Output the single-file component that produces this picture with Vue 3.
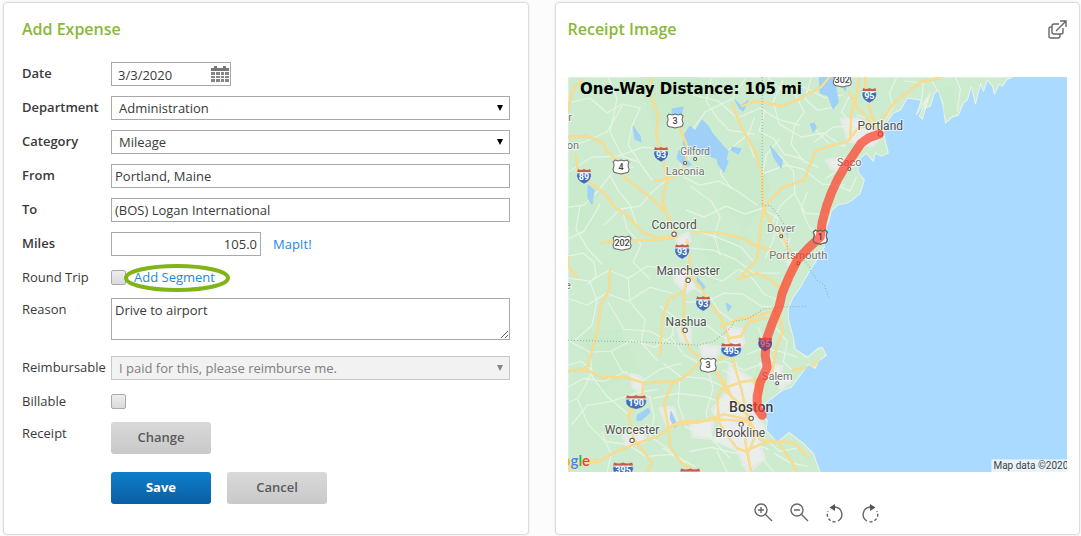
<script setup>
import { ref } from 'vue'

const date = ref('3/3/2020')
const department = ref('Administration')
const category = ref('Mileage')
const from = ref('Portland, Maine')
const to = ref('(BOS) Logan International')
const miles = ref('105.0')
const roundTrip = ref(false)
const reason = ref('Drive to airport')
const reimbursable = ref('I paid for this, please reimburse me.')
const billable = ref(false)

const coast =
  'M568 77H1012L1006 80L1002 86L999 84L994 94L992 86L987 80L983 91L980 84L975 104L971 86L967 100L963 103L958 115L952 117L945 123L943 107L938 90L934 93L930 106L924 108L930 92L922 119L919 116L927 97L916 115L921 100L907 98L900 110L893 113L888 120L883 130L885 141L888 153L881 156L875 153L873 161L866 153L860 158L857 164L858 172L864 180L860 193L852 200L847 203L837 205L831 211L829 220L825 230L824 247L815 262L808 273L800 287L793 297L788 308L788 318L793 337L795 349L807 357L818 348L822 347L826 355L818 361L815 368L808 364L803 371L791 387L782 390L773 397L765 403L759 410L767 420L766 430L777 442L789 432L803 443L813 453L820 472H568Z'

const parks = [
  'M640 77L700 77L720 100L690 130L650 120Z', 'M570 170L600 190L590 230L568 226Z',
  'M730 150L760 140L770 190L745 230L720 200Z', 'M575 330L620 330L640 370L600 390Z',
  'M700 240L740 235L742 270L712 285Z', 'M784 318L793 337L790 350L786 340Z', 'M936 90L950 85L956 112L945 118Z'
]

const lakes = [
  'M685 133L690 126L695 131L702 120L708 126L712 133L722 145L728 151L726 160L715 158L704 154L695 149L687 151L683 144Z',
  'M679 150L685 157L691 165L684 166L677 158Z', 'M732 147L741 149L738 154L731 150Z', 'M716 155L728 161L724 172L718 164Z',
  'M672 109L683 107L681 115L672 118Z', 'M633 126L640 136L641 142L635 139Z', 'M588 185L594 190L592 204L588 198Z',
  'M735 100L741 106L748 100L743 111L739 108Z', 'M770 146L782 160L781 168L774 158Z', 'M819 77L834 77L838 102L833 109L828 96L820 93Z',
  'M843 77L847 81L845 91L842 84Z', 'M637 415L648 408L650 412L641 420L637 420Z', 'M697 277L705 287L703 289L697 282Z',
  'M726 303L731 306L728 311Z', 'M810 124L814 123L816 128L813 132Z', 'M671 411L677 425L674 427L670 418Z'
]

const urban = [
  'M729 366L751 378L760 398L754 414L764 426L759 442L764 458L748 472L736 449L714 440L720 424L712 409L728 391Z',
  'M841 119L858 119L872 126L880 137L872 146L848 141Z', 'M826 160L847 158L855 165L846 170L832 169Z',
  'M673 268L689 270L694 287L687 292L675 282Z', 'M678 329L690 328L690 343L681 340Z', 'M700 345L720 347L716 357L703 356Z',
  'M623 436L644 429L646 441L627 446Z', 'M676 237L688 233L690 241L679 247Z', 'M728 327L741 329L744 343L735 350L726 342Z',
  'M760 363L782 366L779 377L765 377Z', 'M660 408L673 407L678 422L669 429Z', 'M780 237L789 239L786 246Z',
  'M681 152L687 153L688 164L681 166Z', 'M631 374L641 377L643 392L633 387Z', 'M690 422L713 420L710 438L693 437Z',
  'M789 253L796 252L797 262L787 264Z', 'M773 378L791 380L781 388Z', 'M741 405L761 405L761 413L742 414Z'
]

const minorRoads = [
  'M568 103L590 98L607 113L622 104L640 108', 'M608 77L617 99L610 132L622 156L639 162L652 180',
  'M568 148L586 141L607 132L622 106', 'M568 172L592 157L618 156L643 147L653 148', 'M640 108L632 126L628 145L639 161',
  'M569 207L584 205L598 191L611 174L633 167', 'M568 239L584 231L592 218L600 204', 'M580 205L576 229L588 249L602 264',
  'M604 225L620 209L640 206L652 192L666 180', 'M610 175L618 190L630 205L637 226', 'M622 209L627 229L641 244L633 262L650 279',
  'M568 278L590 281L609 270L628 278L647 266L666 268', 'M568 298L587 305L606 293L628 301L650 287L672 293',
  'M590 281L597 301L592 325L575 340', 'M628 278L630 302L645 320L641 342L657 360', 'M608 302L624 329L650 331L675 345',
  'M568 340L590 352L611 351L632 340L655 347L674 334', 'M611 351L622 371L642 381L660 369L681 363', 'M590 352L592 376L607 396L627 413',
  'M568 387L584 378L604 381L627 371', 'M572 424L587 405L611 401L635 393L657 389', 'M578 400L588 424L605 441L627 444',
  'M602 432L611 454L607 472', 'M627 444L646 456L671 454L695 466', 'M637 391L650 397L654 416L650 436L670 450',
  'M684 177L699 185L719 181L737 191L757 205', 'M690 186L711 201L720 217L714 236L720 255', 'M686 210L704 217L726 206L745 214L762 208',
  'M684 224L703 233L714 236L741 247L753 261', 'M711 78L706 101L717 118L729 130L754 134', 'M693 95L718 101L737 118L760 108L777 119L799 125',
  'M692 130L705 112L732 99L745 79', 'M746 136L727 151L720 173L731 188', 'M754 118L747 138L754 157', 'M765 110L759 131L774 139L784 154L803 159',
  'M792 89L804 112L794 126L791 144L803 161L818 167', 'M768 78L782 90L804 87L825 98L842 95', 'M811 77L805 99L817 110L836 107',
  'M783 80L773 102L779 124L801 137L823 133L844 147', 'M764 173L786 165L803 169L822 184L844 185', 'M779 139L766 155L762 176',
  'M778 154L793 171L795 195L805 213L827 215', 'M795 192L779 207L772 224L779 237', 'M807 192L801 208L809 227L824 238',
  'M814 128L829 144L845 145', 'M814 142L833 127L848 126', 'M826 178L842 168L860 162', 'M836 185L850 191L856 177',
  'M690 248L713 250L735 259L754 273L779 273', 'M697 271L722 281L739 269L752 278L764 294L781 301', 'M692 286L711 298L719 311L736 323',
  'M686 302L706 302L723 293L743 294L761 306L784 308', 'M680 318L701 320L718 334L736 343', 'M660 306L676 318L671 337L682 352',
  'M683 354L704 366L725 361L744 370L764 363', 'M663 363L680 376L704 378L725 387L747 384', 'M653 398L677 393L704 396L728 404L751 418',
  'M680 377L678 403L686 427L708 435L731 447', 'M706 363L713 388L706 412L711 438L730 458', 'M736 362L743 388L738 411L752 421',
  'M747 354L763 348L783 352L797 357', 'M758 327L766 350L778 370L790 383', 'M776 328L787 341L783 362L791 369',
  'M690 451L711 447L736 453L754 443L768 449', 'M750 424L764 437L779 451L796 448', 'M774 453L789 462L807 466', 'M663 448L682 459L691 472',
  'M717 451L727 472', 'M741 465L762 458L774 472', 'M723 370L736 377L747 391L755 404', 'M718 405L735 415L750 419',
  'M896 78L889 93L893 107L884 121', 'M904 81L923 83L921 104', 'M930 77L937 91L943 104', 'M955 77L960 89L957 111',
  'M857 115L869 119L877 128', 'M849 97L841 112L850 122L860 129', 'M765 258L773 240L778 218L764 210',
  'M568 256L583 253L594 262L596 276L588 284', 'M568 365L581 361L592 370L586 384L578 398L569 402'
]

const yellowRoads = [
  'M568 111L572 91L582 80', 'M568 137L586 136L603 142L606 151L616 159L624 177L638 188L654 200L664 211',
  'M576 156L578 170L589 181L604 193L615 207L628 216L642 232L657 238L675 236', 'M650 77L652 100L658 115L656 135L661 151L665 169L667 181L662 201L670 222L677 236',
  'M680 129L688 148L685 166L671 178L655 181', 'M565 471L579 464L599 461L616 451L637 443L657 436L676 424L699 422L724 414L748 419',
  'M601 243L618 240L650 240L674 238', 'M687 240L690 263L687 276L684 293L684 310L682 330L691 351L702 359',
  'M693 232L716 232L742 238L754 245L768 249L782 257L798 261', 'M732 104L741 127L754 150L762 174L763 207',
  'M742 106L755 101L781 106L799 99L821 87L829 77', 'M763 207L771 223L782 236L789 250L797 260', 'M763 208L782 187L804 180L815 151L832 145L847 142L858 128L873 125',
  'M763 209L760 230L757 259L742 275', 'M577 277L568 266L568 257', 'M610 270L609 290L601 304L597 332L588 365L583 371',
  'M568 371L584 369L604 377L626 377L645 383L672 381L681 379', 'M690 276L699 285L710 303L721 318L728 337L733 361L741 388L747 417',
  'M684 291L668 299L662 320L660 355', 'M721 326L741 318L751 317L776 310', 'M737 279L757 273L771 280L782 290', 'M776 310L783 283L798 261',
  'M728 338L741 336L748 322L765 318', 'M729 355L708 362L702 359L689 373L672 384L664 403L668 426L670 447L681 462L696 472',
  'M668 427L681 421L698 421L719 419L748 421', 'M630 402L629 418L634 439L652 462L647 472', 'M714 370L724 382L733 399L744 412L751 418',
  'M748 419L755 436L748 452L737 448L727 435L719 422L717 397L721 389L740 382L758 379L767 380', 'M748 419L760 439L779 443L790 459L797 472',
  'M749 423L745 441L751 472', 'M746 450L763 443L776 440L794 443L807 456', 'M709 359L718 375L726 391L739 403L749 418',
  'M793 370L810 366L821 360', 'M849 93L857 107L867 118L876 129', 'M865 77L865 94L872 117L880 132', 'M881 122L895 101L909 91L920 82L939 78',
  'M859 77L857 93L851 112L850 137', 'M754 382L761 394L756 408', 'M777 312L783 330L776 348L772 374', 'M568 466L588 460L601 460', 'M643 383L642 403L629 413'
]

const stateLines = [
  'M762 77L762 206L770 205L780 218L787 229L787 250L802 258L811 269', 'M568 340L650 342L698 345L714 341L731 327L734 321L747 319L763 309L776 307L806 306', 'M810 270L817 280L824 285L829 298'
]

const route =
  'M879 134L868 138L861 143L853 155L845 166L837 180L831 193L826 207L822 222L820 237L808 248L797 260L789 276L782 293L779 306L772 323L766 340L765 355L767 367L760 382L757 396L757 408L762 415'

const cities = [
  { name: 'Portland', x: 880, y: 130, size: 12, dot: [880, 134] },
  { name: 'Saco', x: 849, y: 166, size: 11, minor: true, dot: [849, 169] },
  { name: 'Gilford', x: 695, y: 155, size: 10, minor: true, dot: [695, 159] },
  { name: 'Laconia', x: 685, y: 175, size: 11, minor: true, dot: [685, 163] },
  { name: 'Concord', x: 674, y: 229, size: 12, dot: [674, 234] },
  { name: 'Dover', x: 781, y: 232, size: 11, minor: true, dot: [781, 236] },
  { name: 'Portsmouth', x: 798, y: 259, size: 11, minor: true, dot: [798, 263] },
  { name: 'Manchester', x: 688, y: 275, size: 12, dot: [688, 280] },
  { name: 'Nashua', x: 686, y: 326, size: 12, dot: [685, 330] },
  { name: 'Salem', x: 777, y: 380, size: 11, minor: true, dot: [777, 383] },
  { name: 'Boston', x: 751, y: 412, size: 14, capital: true, dot: [751, 418] },
  { name: 'Brookline', x: 740, y: 437, size: 12, dot: [741, 424] },
  { name: 'Worcester', x: 632, y: 434, size: 12, dot: [632, 440] },
  { name: 'r', x: 570, y: 121, size: 11, minor: true },
  { name: 'on', x: 573, y: 149, size: 11, minor: true },
  { name: 'e', x: 568, y: 289, size: 11, minor: true }
]

const interstates = [
  { n: '93', x: 661, y: 154 }, { n: '89', x: 584, y: 176 }, { n: '93', x: 682, y: 251 }, { n: '93', x: 703, y: 303 },
  { n: '95', x: 869, y: 95 }, { n: '190', x: 636, y: 402, wide: true }, { n: '495', x: 731, y: 350, wide: true },
  { n: '395', x: 623, y: 469, wide: true }, { n: '', x: 690, y: 475, wide: true }
]

const usRoutes = [
  { n: '3', x: 675, y: 121 }, { n: '4', x: 621, y: 167 }, { n: '202', x: 622, y: 243, wide: true },
  { n: '3', x: 708, y: 365 }, { n: '302', x: 842, y: 80, wide: true }
]
</script>

<template>
  <main class="page">
    <form class="panel expense" @submit.prevent>
      <h2>Add Expense</h2>

      <div class="rows">
        <div class="row">
          <label class="required" for="date">Date</label>
          <div class="date-box">
            <input id="date" v-model="date" type="text" />
            <button type="button" class="calendar" aria-label="Choose date">
              <svg viewBox="0 0 18 16" width="18" height="16" aria-hidden="true">
                <path d="M0 2H18V5H0Z" fill="#777" />
                <path d="M3 0H6V3H3ZM12 0H15V3H12Z" fill="#777" />
                <path d="M0 6h4v3H0zM5 6h4v3H5zM10 6h3v3h-3zM14 6h4v3h-4zM0 10h4v2H0zM5 10h4v2H5zM10 10h3v2h-3zM14 10h4v2h-4zM0 13h4v3H0zM5 13h4v3H5zM10 13h3v3h-3zM14 13h4v3h-4z" fill="#858585" />
              </svg>
            </button>
          </div>
        </div>

        <div class="row">
          <label class="required" for="department">Department</label>
          <div class="select-box">
            <select id="department" v-model="department"><option>Administration</option></select>
            <svg class="caret" viewBox="0 0 8 6" aria-hidden="true"><path d="M1 0H7L4 6Z" /></svg>
          </div>
        </div>

        <div class="row">
          <label class="required" for="category">Category</label>
          <div class="select-box">
            <select id="category" v-model="category"><option>Mileage</option></select>
            <svg class="caret" viewBox="0 0 8 6" aria-hidden="true"><path d="M1 0H7L4 6Z" /></svg>
          </div>
        </div>

        <div class="row">
          <label class="required" for="from">From</label>
          <input id="from" v-model="from" class="text" type="text" />
        </div>

        <div class="row">
          <label class="required" for="to">To</label>
          <input id="to" v-model="to" class="text" type="text" />
        </div>

        <div class="row">
          <label class="required" for="miles">Miles</label>
          <div class="inline">
            <input id="miles" v-model="miles" class="text miles" type="text" />
            <a href="#map">MapIt!</a>
          </div>
        </div>

        <div class="row">
          <label for="round-trip">Round Trip</label>
          <div class="inline check-line">
            <input id="round-trip" v-model="roundTrip" type="checkbox" />
            <span class="highlight">
              <a href="#segment">Add Segment</a>
              <svg class="ring" viewBox="0 0 106 28" aria-hidden="true"><ellipse cx="53" cy="14" rx="51" ry="12" /></svg>
            </span>
          </div>
        </div>

        <div class="row">
          <label for="reason">Reason</label>
          <textarea id="reason" v-model="reason"></textarea>
        </div>

        <div class="row spaced">
          <label for="reimbursable">Reimbursable</label>
          <div class="select-box disabled">
            <select id="reimbursable" v-model="reimbursable" disabled><option>I paid for this, please reimburse me.</option></select>
            <svg class="caret" viewBox="0 0 8 6" aria-hidden="true"><path d="M1 0H7L4 6Z" /></svg>
          </div>
        </div>

        <div class="row">
          <label for="billable">Billable</label>
          <div class="inline check-line">
            <input id="billable" v-model="billable" type="checkbox" />
          </div>
        </div>

        <div class="row">
          <label for="receipt">Receipt</label>
          <div><button id="receipt" type="button" class="btn">Change</button></div>
        </div>
      </div>

      <div class="actions">
        <button type="submit" class="btn primary">Save</button>
        <button type="button" class="btn">Cancel</button>
      </div>
    </form>

    <section class="panel receipt">
      <header>
        <h2>Receipt Image</h2>
        <button type="button" class="icon" aria-label="Open in new window">
          <svg viewBox="0 0 20 20" width="20" height="20" aria-hidden="true">
            <path d="M12 5H7Q5 5 5 7V13Q5 15 7 15H14Q16 15 16 13V9M5 8H4Q2 8 2 10V17Q2 19 4 19H11Q13 19 13 17V15M9 12L19 2M13 2H19V8" />
          </svg>
        </button>
      </header>

      <svg id="map" class="map" viewBox="568 77 499 395" role="img" aria-label="Route map from Portland to Boston">
        <defs>
          <clipPath id="land"><path :d="coast" /></clipPath>
        </defs>
        <rect x="568" y="77" width="499" height="395" fill="#aadaff" />
        <path :d="coast" fill="#cdebcf" stroke="#e9f4e6" stroke-width="1" />
        <g clip-path="url(#land)">
          <path v-for="d in parks" :key="d" :d="d" fill="#c3e8c6" opacity="0.4" />
          <path v-for="d in urban" :key="d" :d="d" fill="#ebedec" stroke="#e4ebe4" stroke-width="3" stroke-linejoin="round" />
          <path v-for="d in minorRoads" :key="d" class="road minor" :d="d" />
          <path v-for="d in lakes" :key="d" :d="d" fill="#9fd0f8" stroke="#9fd0f8" stroke-linejoin="round" />
          <path v-for="d in yellowRoads" :key="d" class="road casing" :d="d" />
          <path v-for="d in yellowRoads" :key="d" class="road major" :d="d" />
        </g>
        <path v-for="d in stateLines" :key="d" :d="d" fill="none" stroke="#9aa9ad" stroke-dasharray="1 2" stroke-width="1" />

        <g v-for="(c, i) in cities" :key="i">
          <circle v-if="c.dot" :cx="c.dot[0]" :cy="c.dot[1]" :r="c.minor ? 1.5 : 2.2" fill="#fff" stroke="#555" />
          <text :class="['city', { small: c.minor, capital: c.capital }]" :x="c.x" :y="c.y" :font-size="c.size">{{ c.name }}</text>
        </g>

        <g transform="translate(820 237)">
          <path class="us" d="M-7 -5L-5 -7L-2 -6L0 -7L2 -6L5 -7L7 -5Q5 -2 7 2Q7 6 3 6L0 7L-3 6Q-7 6 -7 2Q-5 -2 -7 -5Z" />
        </g>
        <g transform="translate(765 343)">
          <path d="M-6 -3H6Q9 4 0 8Q-9 4 -6 -3Z" fill="#3c70b8" />
          <path d="M-6 -6Q-3 -4 0 -6Q3 -4 6 -6L7 -3H-7Z" fill="#c94b49" />
        </g>
        <path :d="route" fill="none" stroke="#ff3c28" stroke-opacity="0.7" stroke-width="9" stroke-linecap="round" stroke-linejoin="round" />
        <g transform="translate(820 237)">
          <path class="us faint" d="M-7 -5L-5 -7L-2 -6L0 -7L2 -6L5 -7L7 -5Q5 -2 7 2Q7 6 3 6L0 7L-3 6Q-7 6 -7 2Q-5 -2 -7 -5Z" />
          <text class="us-text" y="3">1</text>
        </g>
        <g transform="translate(765 343)">
          <path d="M-6 -3H6Q9 4 0 8Q-9 4 -6 -3Z" fill="#6b3f78" fill-opacity="0.7" />
          <text class="interstate-text muted" y="4">95</text>
        </g>

        <g v-for="(s, i) in interstates" :key="'i' + i" :transform="`translate(${s.x} ${s.y})`">
          <path v-if="s.wide" d="M-10 -3H10Q12 5 0 7Q-12 5 -10 -3Z" fill="#3c70b8" stroke="#fff" stroke-width="0.5" />
          <path v-else d="M-7 -3H7Q9 4 0 8Q-9 4 -7 -3Z" fill="#3c70b8" stroke="#fff" stroke-width="0.5" />
          <path v-if="s.wide" d="M-9 -7Q-4 -5 0 -7Q4 -5 9 -7L10 -4H-10Z" fill="#c65b50" />
          <path v-else d="M-6 -7Q-3 -5 0 -7Q3 -5 6 -7L7 -4H-7Z" fill="#c65b50" />
          <text class="interstate-text" y="4">{{ s.n }}</text>
        </g>
        <g v-for="(s, i) in usRoutes" :key="'u' + i" :transform="`translate(${s.x} ${s.y})`">
          <path v-if="s.wide" class="us" d="M-9 -5L-7 -7L-3 -6L0 -7L3 -6L7 -7L9 -5Q7 -2 9 2Q9 6 4 6L0 7L-4 6Q-9 6 -9 2Q-7 -2 -9 -5Z" />
          <path v-else class="us" d="M-8 -5L-6 -7L-3 -6L0 -7L3 -6L6 -7L8 -5Q6 -2 8 2Q8 6 4 6L0 7L-4 6Q-8 6 -8 2Q-6 -2 -8 -5Z" />
          <text class="us-text" y="3">{{ s.n }}</text>
        </g>

        <text class="brand" x="562" y="466"><tspan fill="#f4b400">o</tspan><tspan fill="#4285f4">g</tspan><tspan fill="#34a853">l</tspan><tspan fill="#ea4335">e</tspan></text>
        <text class="distance" x="580" y="94">One-Way Distance: 105 mi</text>
        <rect x="991" y="459" width="76" height="13" fill="#e8f3fb" />
        <text class="credit" x="993" y="469">Map data ©2020</text>
      </svg>

      <div class="tools">
        <button type="button" class="icon" aria-label="Zoom in">
          <svg viewBox="0 0 20 20" width="20" height="20" aria-hidden="true">
            <circle cx="8" cy="7" r="6" /><path d="M12 11L19 18M8 4V10M5 7H11" />
          </svg>
        </button>
        <button type="button" class="icon" aria-label="Zoom out">
          <svg viewBox="0 0 20 20" width="20" height="20" aria-hidden="true">
            <circle cx="8" cy="7" r="6" /><path d="M12 11L19 18M5 7H11" />
          </svg>
        </button>
        <button type="button" class="icon" aria-label="Rotate left">
          <svg viewBox="0 0 20 20" width="20" height="20" aria-hidden="true">
            <path d="M8 4H10A7.500 7.500 0 0 1 13 18" /><path d="M10.500 18.800A7.500 7.500 0 0 1 3 8" stroke-dasharray="3 2" /><path class="solid" d="M4.500 4.500L10 1V8Z" />
          </svg>
        </button>
        <button type="button" class="icon" aria-label="Rotate right">
          <svg viewBox="0 0 20 20" width="20" height="20" aria-hidden="true">
            <path d="M11 4H9A7.500 7.500 0 0 0 6 18" /><path d="M8.500 18.800A7.500 7.500 0 0 0 16 8" stroke-dasharray="3 2" /><path class="solid" d="M14.500 4.500L9 1V8Z" />
          </svg>
        </button>
      </div>
    </section>
  </main>
</template>

<style>
body {
  background: #fcfcfc;
}
</style>

<style scoped>
.page {
  display: grid;
  grid-template-columns: 1fr 1fr;
  gap: 26px;
  padding: 2px 1px 1px 3px;
  color: #3a3a3a;
  font: 13px/22px "Open Sans", "Noto Sans", sans-serif;
}
.page *,
.page {
  box-sizing: border-box;
}
.panel {
  min-width: 0;
  border: 1px solid #dcdcdc;
  border-radius: 4px;
  background: #fff;
  box-shadow: 0 0 3px rgba(0, 0, 0, 0.08);
}
.expense {
  padding: 15px 18px 30px;
}
.receipt {
  padding: 15px 12px 10px;
}
h2 {
  margin: 0;
  color: #8ab839;
  font-size: 16px;
  font-weight: 600;
  line-height: 22px;
}
.rows {
  display: flex;
  flex-direction: column;
  gap: 10px;
  margin-top: 22px;
}
.row {
  display: grid;
  grid-template-columns: 89px minmax(0, 1fr);
  align-items: start;
}
.spaced {
  margin-top: 6px;
}
.required {
  font-weight: 600;
}
input,
select,
textarea,
button {
  margin: 0;
  color: inherit;
  font: inherit;
}
.text,
.date-box,
select,
textarea {
  display: block;
  width: 100%;
  height: 24px;
  border: 1px solid #a9a9a9;
  border-radius: 0;
  background: #fff;
}
.text {
  padding: 0 3px;
}
.date-box {
  display: flex;
  align-items: center;
  width: 120px;
  padding-right: 1px;
}
.date-box input {
  flex: 1;
  min-width: 0;
  height: 22px;
  padding: 2px 0 0 6px;
  border: 0;
  background: none;
}
.calendar {
  display: flex;
  padding: 0;
  border: 0;
  background: none;
}
.select-box {
  position: relative;
}
select {
  padding: 0 24px 0 7px;
  appearance: none;
}
.caret {
  position: absolute;
  top: 9px;
  right: 6px;
  width: 8px;
  height: 6px;
  fill: #000;
  pointer-events: none;
}
.disabled select {
  border-color: #c8c8c8;
  background: #f2f2f2;
  color: #808080;
  opacity: 1;
}
.disabled .caret {
  fill: #858585;
}
.inline {
  display: flex;
  align-items: center;
  gap: 12px;
}
.miles {
  width: 150px;
  text-align: right;
}
a {
  color: #2389dc;
  text-decoration: none;
}
.check-line {
  height: 22px;
  gap: 8px;
}
input[type="checkbox"] {
  width: 15px;
  height: 15px;
  border: 1px solid #aaa;
  border-radius: 2px;
  background: linear-gradient(#eee, #dadada);
  appearance: none;
}
.highlight {
  position: relative;
}
.ring {
  position: absolute;
  top: -2px;
  left: -10px;
  width: 106px;
  height: 28px;
  fill: none;
  stroke: #82b317;
  stroke-width: 4;
  pointer-events: none;
}
textarea {
  height: 42px;
  padding: 0 3px;
  resize: vertical;
}
.btn {
  display: block;
  width: 100px;
  height: 32px;
  padding: 0 0 2px;
  border: 0;
  border-radius: 3px;
  background: linear-gradient(#d9d9d9, #c9c9c9);
  color: #595959;
  font-weight: 600;
}
.primary {
  background: linear-gradient(#0e7fca, #0a5ea3);
  color: #fff;
  font-weight: 700;
}
.actions {
  display: flex;
  gap: 16px;
  margin: 18px 0 0 89px;
}
header {
  display: flex;
  justify-content: space-between;
}
.icon {
  display: flex;
  padding: 0;
  border: 0;
  background: none;
}
header .icon {
  padding-top: 1px;
}
.icon svg {
  fill: none;
  stroke: #666;
  stroke-width: 1.4;
}
.icon .solid {
  fill: #555;
  stroke: none;
}
.map {
  display: block;
  width: 100%;
  height: auto;
  margin-top: 37px;
  font-family: Roboto, sans-serif;
  text-anchor: middle;
}
.road {
  fill: none;
  stroke-linejoin: round;
  stroke-linecap: round;
}
.minor {
  stroke: #e6f4e5;
  stroke-width: 1.2;
}
.casing {
  stroke: #f4d58a;
  stroke-width: 2.4;
}
.major {
  stroke: #f9de92;
  stroke-width: 1.6;
}
.city {
  fill: #505050;
  stroke: #fff;
  stroke-opacity: 0.6;
  stroke-width: 2;
  paint-order: stroke;
}
.small {
  fill: #747474;
}
.capital {
  fill: #3c3c3c;
  font-weight: 500;
}
.interstate-text {
  fill: #fff;
  font-size: 9px;
  font-weight: 700;
}
.muted {
  fill: #c9768c;
}
.us {
  fill: #fff;
  stroke: #666;
  stroke-width: 1;
}
.faint {
  fill: none;
}
.us-text {
  fill: #444;
  font-size: 9px;
  font-weight: 500;
}
.brand {
  font: 600 15px Lato, sans-serif;
  text-anchor: start;
}
.distance {
  fill: #000;
  font: 700 15px "DejaVu Sans", sans-serif;
  text-anchor: start;
}
.credit {
  fill: #444;
  font: 10px Roboto, sans-serif;
  text-anchor: start;
}
.tools {
  display: flex;
  justify-content: center;
  gap: 16px;
  margin-top: 31px;
}
</style>
